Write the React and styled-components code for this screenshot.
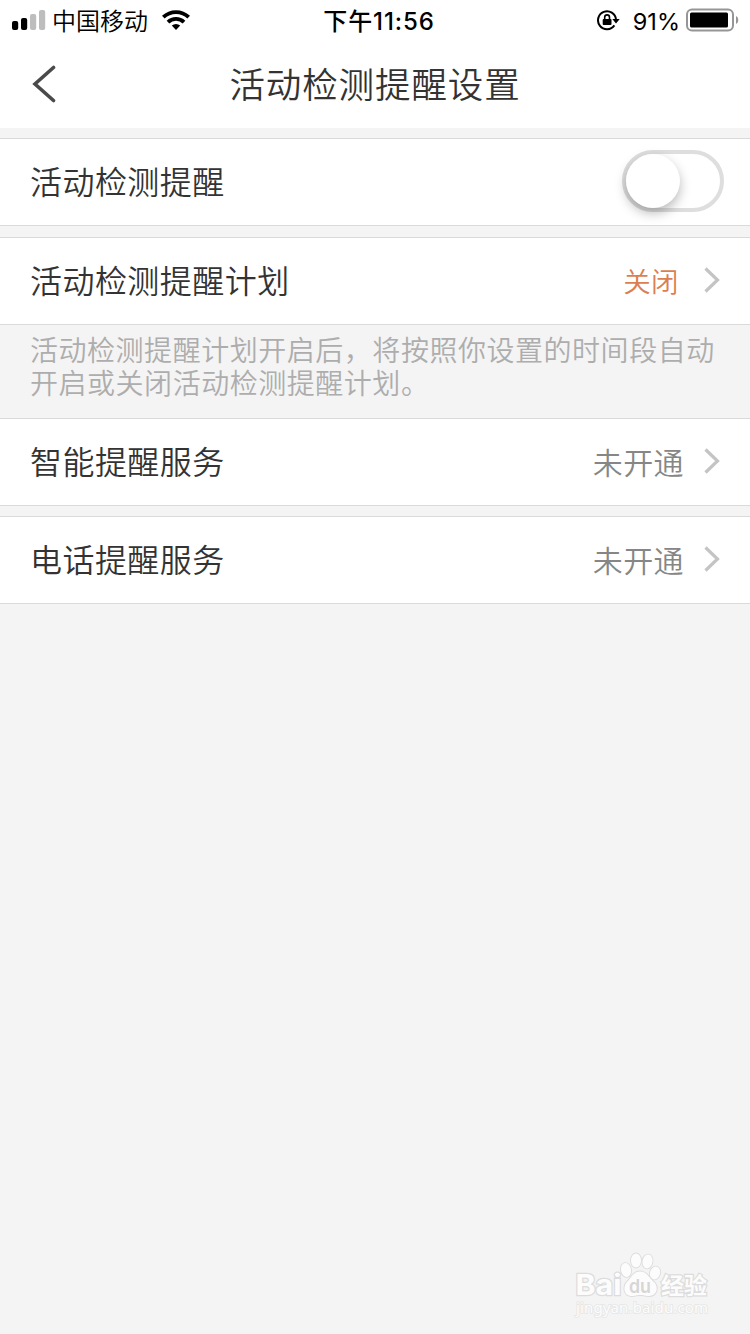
import React from 'react';
import styled, { createGlobalStyle } from 'styled-components';

const GlobalStyle = createGlobalStyle`
  * { box-sizing: border-box; }
  body {
    margin: 0;
    background: #f4f4f4;
    font-family: Inter, "Noto Sans CJK SC", sans-serif;
    color: #333;
  }
`;

const Screen = styled.main`
  position: relative;
  width: 750px;
  height: 1334px;
  overflow: hidden;
  background: #f4f4f4;
`;

const StatusBar = styled.header`
  display: grid;
  grid-template-columns: 1fr auto 1fr;
  align-items: center;
  height: 40px;
  padding: 0 10px 0 12px;
  background: #fff;
  color: #000;
`;

const StatusGroup = styled.div`
  display: flex;
  align-items: center;
  justify-content: ${(p) => (p.$end ? 'flex-end' : 'flex-start')};
  height: 40px;
`;

const Carrier = styled.span`
  margin: 0 14px 0 6px;
  padding-top: 3px;
  font-size: 24px;
  font-weight: 350;
  line-height: 37px;
`;

const Clock = styled.span`
  margin-left: 6px;
  padding-top: 3px;
  font-size: 24px;
  font-weight: 500;
  line-height: 37px;
  letter-spacing: 0.9px;
`;

const Percent = styled.span`
  margin: 0 6px 0 13px;
  padding-top: 3px;
  font-size: 23.5px;
  line-height: 37px;
`;

const NavBar = styled.nav`
  display: grid;
  grid-template-columns: 100px 1fr 100px;
  align-items: center;
  height: 88px;
  background: #fff;
`;

const BackButton = styled.button`
  display: flex;
  padding: 0 0 0 32px;
  border: 0;
  background: none;
`;

const Title = styled.h1`
  margin: 0;
  padding-top: 3px;
  text-align: center;
  font-size: 35.5px;
  font-weight: 350;
  line-height: 85px;
  letter-spacing: 0.9px;
`;

const Row = styled.section`
  display: flex;
  align-items: center;
  height: 88px;
  margin-top: ${(p) => p.$gap || 0}px;
  padding: 0 30px 2px;
  border: solid #dadada;
  border-width: 1px 0;
  background: #fff;
`;

const Label = styled.span`
  flex: 1;
  padding-top: 3px;
  font-size: 32px;
  font-weight: 350;
  line-height: 83px;
  letter-spacing: 0.45px;
`;

const Value = styled.span`
  margin-right: ${(p) => (p.$accent ? 25 : 20)}px;
  font-size: ${(p) => (p.$accent ? 27.5 : 30)}px;
  font-weight: 350;
  letter-spacing: 0.4px;
  color: ${(p) => (p.$accent ? '#dc7f50' : '#868686')};
`;

const Note = styled.p`
  height: 93px;
  margin: 0;
  padding: 10px 30px 0;
  font-size: 28px;
  font-weight: 350;
  line-height: 33px;
  letter-spacing: 0.53px;
  white-space: nowrap;
  color: #adadad;
`;

const Toggle = styled.button`
  display: flex;
  align-items: center;
  width: 102px;
  height: 62px;
  margin-right: -4px;
  padding: 0;
  border: 4px solid #dedede;
  border-radius: 31px;
  background: #fff;
`;

const Knob = styled.span`
  width: 54px;
  height: 54px;
  border-radius: 50%;
  background: #fff;
  box-shadow: 0 5px 12px rgba(0, 0, 0, 0.28);
`;

const Watermark = styled.svg`
  position: absolute;
  left: 570px;
  top: 1248px;
`;

const Signal = () => (
  <svg width="34" height="22" viewBox="0 0 34 22">
    <rect x="0" y="12" width="6.2" height="9" rx="2" fill="#000" />
    <rect x="9" y="9" width="6.2" height="12" rx="2" fill="#000" />
    <rect x="18" y="5" width="6.2" height="16" rx="2" fill="#bdbdbd" />
    <rect x="27" y="1" width="6.2" height="20" rx="2" fill="#bdbdbd" />
  </svg>
);

const Wifi = () => (
  <svg width="28" height="20" viewBox="0 0 28 20" fill="none" stroke="#000" strokeWidth="3.8">
    <path d="M1.3 7.2a18.2 18.2 0 0 1 25.4 0" />
    <path d="M6 12.2a11.500 11.500 0 0 1 16 0" />
    <path d="M14 20l-4.200-4.400a6.100 6.100 0 0 1 8.400 0z" fill="#000" stroke="none" />
  </svg>
);

const RotationLock = () => (
  <svg width="23" height="22" viewBox="0 0 23 22" fill="none">
    <path d="M17.400 16.400A9 9 0 1 1 19 10.500" stroke="#000" strokeWidth="2" />
    <path d="M15.300 10h7.400l-3.700 4.400z" fill="#000" />
    <rect x="5.700" y="10" width="8.800" height="6" rx="0.900" fill="#000" />
    <path d="M7.700 10.500V8.300a2.400 2.400 0 0 1 4.800 0v2.200" stroke="#000" strokeWidth="1.600" />
  </svg>
);

const Battery = () => (
  <svg width="54" height="24" viewBox="0 0 54 24">
    <rect x="1" y="1.500" width="46" height="21" rx="5" fill="#fff" stroke="#969696" strokeWidth="2" />
    <rect x="4" y="4.500" width="38" height="15" rx="1.500" fill="#000" />
    <path d="M50 8c3 1.200 3 6.800 0 8z" fill="#969696" />
  </svg>
);

const BackIcon = () => (
  <svg width="25" height="38" viewBox="0 0 25 38" fill="none">
    <path d="M21.500 2.500L3 19l18.500 16.500" stroke="#4a4a4a" strokeWidth="3.600" strokeLinecap="round" />
  </svg>
);

const Chevron = () => (
  <svg width="16" height="26" viewBox="0 0 16 26" fill="none">
    <path d="M1.500 1.500L13.500 13l-12 11.500" stroke="#c4c4c4" strokeWidth="3.200" />
  </svg>
);

const BaiduMark = () => (
  <Watermark width="150" height="75" viewBox="0 0 150 75">
    <g fill="#fcfcfc" stroke="#dcdcdc" strokeWidth="1.800" paintOrder="stroke">
      <ellipse cx="56" cy="22" rx="5" ry="7" transform="rotate(-10 56 22)" />
      <ellipse cx="66" cy="12.500" rx="5" ry="7" />
      <ellipse cx="77.500" cy="13.500" rx="5" ry="7" transform="rotate(10 77.500 13.500)" />
      <ellipse cx="85" cy="25" rx="5" ry="6.500" transform="rotate(18 85 25)" />
      <path d="M70 23.500c-7 0-8.500 6-13 10.500-4 4-4 14 5 14 4 0 4-1 8-1s4 1 9 1c8 0 10-9 5-14-5-4-7-10.500-14-10.500z" />
      <g fontFamily="Inter, 'Noto Sans CJK SC', sans-serif" strokeWidth="2.400">
        <text x="5.500" y="47" fontSize="29" fontWeight="700" textLength="46" lengthAdjust="spacingAndGlyphs">Bai</text>
        <text x="91" y="46" fontSize="23" fontWeight="700" textLength="46">经验</text>
      </g>
      <text x="59" y="45" fontFamily="Inter, sans-serif" fontSize="19" fontWeight="600" fill="#d6d6d6" stroke="none" textLength="22" lengthAdjust="spacingAndGlyphs">du</text>
      <text x="6" y="65" fontFamily="'Noto Sans', sans-serif" fontSize="15" stroke="#e6e6e6" strokeWidth="1.600" textLength="132">jingyan.baidu.com</text>
    </g>
  </Watermark>
);

export default function App() {
  return (
    <>
      <GlobalStyle />
      <Screen>
        <StatusBar>
          <StatusGroup>
            <Signal />
            <Carrier>中国移动</Carrier>
            <Wifi />
          </StatusGroup>
          <Clock>下午11:56</Clock>
          <StatusGroup $end>
            <RotationLock />
            <Percent>91%</Percent>
            <Battery />
          </StatusGroup>
        </StatusBar>
        <NavBar>
          <BackButton aria-label="返回"><BackIcon /></BackButton>
          <Title>活动检测提醒设置</Title>
        </NavBar>
        <Row $gap={10}>
          <Label>活动检测提醒</Label>
          <Toggle role="switch" aria-checked="false"><Knob /></Toggle>
        </Row>
        <Row $gap={11}>
          <Label>活动检测提醒计划</Label>
          <Value $accent>关闭</Value>
          <Chevron />
        </Row>
        <Note>
          活动检测提醒计划开启后，将按照你设置的时间段自动
          <br />
          开启或关闭活动检测提醒计划。
        </Note>
        <Row>
          <Label>智能提醒服务</Label>
          <Value>未开通</Value>
          <Chevron />
        </Row>
        <Row $gap={10}>
          <Label>电话提醒服务</Label>
          <Value>未开通</Value>
          <Chevron />
        </Row>
        <BaiduMark />
      </Screen>
    </>
  );
}
